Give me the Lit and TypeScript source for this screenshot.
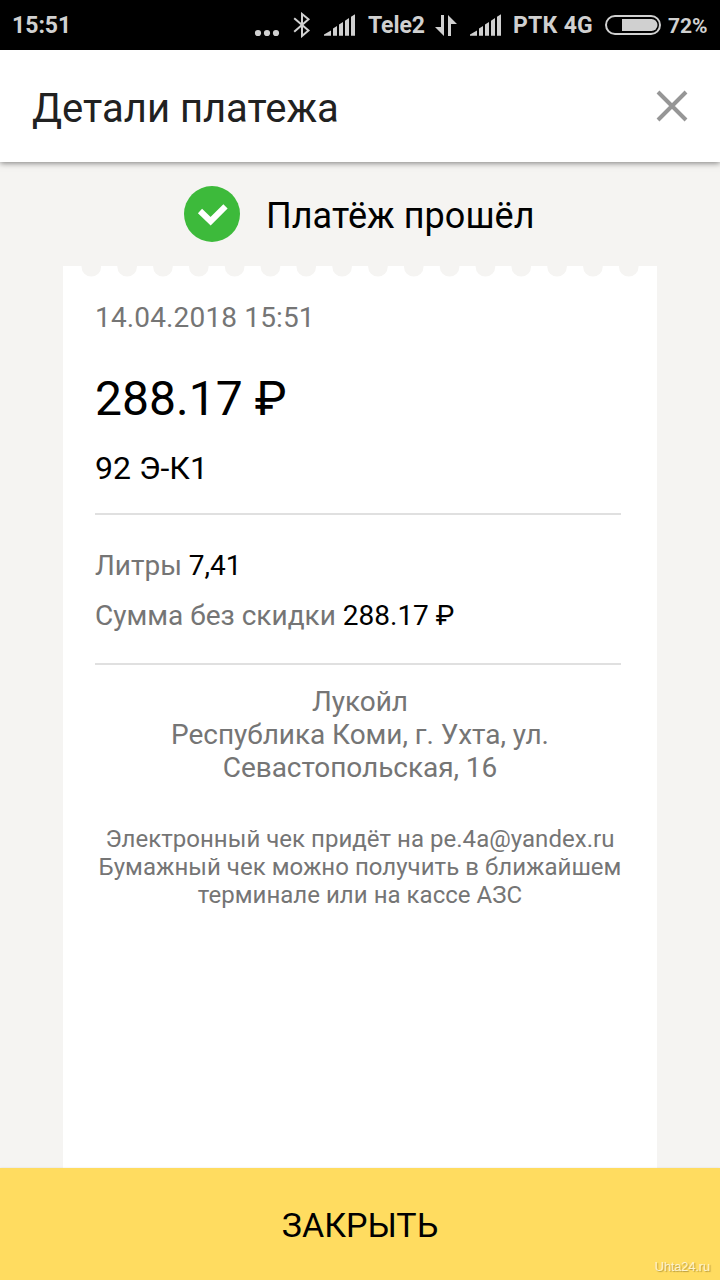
import { LitElement, html, svg, css } from "lit";
import { customElement } from "lit/decorators.js";

const signal = () => html`<svg class="signal" width="32" height="22" viewBox="0 0 32 22">
  <path fill="#d0d0d0" d="M0 21.7V20.5L7 16.4V21.7ZM9 21.7V14.6L13 12V21.7ZM15 21.7V10.6L19 8V21.7ZM21 21.7V6.8L25 4V21.7ZM27 21.7V2.8L31 0.2V21.7Z"/>
</svg>`;

@customElement("status-bar")
class StatusBar extends LitElement {
  static styles = css`
    :host { display: flex; align-items: flex-start; height: 50px; background: #000; color: #d0d0d0;
      font: 700 23px/50px Roboto, sans-serif; white-space: nowrap; }
    span { display: block; flex: none; height: 50px; padding-top: 1px; box-sizing: border-box; }
    svg { display: block; flex: none; }
    .time { width: 242px; padding-left: 12px; }
    .dots { margin: 29px 0 0 12px; }
    .bt { margin: 12px 0 0 13px; }
    .signal { margin: 14px 0 0 13px; }
    .op1 { width: 56px; margin-left: 12px; letter-spacing: -0.1px; }
    .arrows { margin: 15px 0 0 11px; }
    .op2 { width: 82px; margin-left: 11px; letter-spacing: 0.25px; }
    .battery { margin: 14px 0 0 9px; }
    .pct { margin-left: 6px; font-size: 21px; }
  `;
  render() {
    return html`
      <span class="time">15:51</span>
      <svg class="dots" width="26" height="8" viewBox="0 0 26 8" fill="#d0d0d0">
        <circle cx="4" cy="4" r="3.1"/><circle cx="13" cy="4" r="3.1"/><circle cx="22" cy="4" r="3.1"/>
      </svg>
      <svg class="bt" width="18" height="26" viewBox="0 0 18 26" fill="none" stroke="#d0d0d0" stroke-width="2">
        <path d="M1.2 6.2L15.5 18.5L9 24V2L15.5 7.3L1.2 19.8"/>
      </svg>
      ${signal()}
      <span class="op1">Tele2</span>
      <svg class="arrows" width="22" height="21" viewBox="0 0 22 21" fill="#d0d0d0">
        <path d="M6 0H9V21L0 12H6ZM13 0L22 9H16V21H13Z"/>
      </svg>
      ${signal()}
      <span class="op2">РТК 4G</span>
      <svg class="battery" width="58" height="22" viewBox="0 0 58 22">
        <rect x="2" y="2" width="54" height="18" rx="9" fill="none" stroke="#d0d0d0" stroke-width="2"/>
        <path fill="#d0d0d0" d="M18 5H47.5A6 6 0 0 1 47.5 17H18Z"/>
      </svg>
      <span class="pct">72%</span>
    `;
  }
}

@customElement("app-root")
class AppRoot extends LitElement {
  static styles = css`
    :host { display: flex; flex-direction: column; position: relative; width: 720px; height: 1280px; overflow: hidden;
      background: #f5f4f2; color: #000; font-family: Roboto, sans-serif; }
    svg { display: block; flex: none; }
    status-bar { flex: none; }
    .header { display: flex; justify-content: space-between; flex: none; height: 112px; box-sizing: border-box;
      padding: 0 32px; background: #fff; color: #212121; box-shadow: 0 1px 6px rgba(0,0,0,.5); }
    .title { padding-top: 3px; font-size: 40px; line-height: 112px; }
    .close { margin-top: 40px; }
    .result { display: flex; flex: none; height: 104px; padding-left: 184px; }
    .check { margin: 24px 26px 0 0; }
    .result-text { padding-top: 2px; font-size: 36px; line-height: 104px; letter-spacing: 0.06px; }
    .receipt { flex: 1; width: 594px; margin-left: 63px; box-sizing: border-box; background: #fff; min-height: 0; }
    .body { padding: 24px 36px 0 32px; }
    .date { color: #757575; font-size: 28px; line-height: 33px; letter-spacing: 0.15px; }
    .amount { margin-top: 37px; font-size: 48px; line-height: 56px; letter-spacing: 0.05px; }
    .fuel { margin-top: 22px; font-size: 32px; line-height: 38px; }
    .rule { height: 2px; background: #e0e0e0; }
    .r1 { margin-top: 26px; }
    .facts { padding-top: 26px; height: 122px; font-size: 28px; line-height: 50px; }
    .label, .place, .note { color: #757575; }
    .place { margin-top: 20px; font-size: 28px; line-height: 33px; text-align: center; padding-left: 4px; letter-spacing: -0.05px; }
    .note { margin: 41px -10px 0 -6px; font-size: 24px; line-height: 28px; text-align: center; letter-spacing: 0.03px; }
    .place div, .note div { white-space: nowrap; }
    .button { flex: none; height: 112px; background: #ffdc60; text-align: center; font-size: 34px; line-height: 115px;
      box-shadow: 0 0 2px rgba(0,0,0,.1); }
    .mark { position: absolute; right: 10px; bottom: 6px; font: 13px/15px "Liberation Sans", sans-serif; letter-spacing: -0.2px;
      color: #fff3cd; text-shadow: 1px 1px 1px rgba(110,90,30,.5); }
  `;
  render() {
    return html`
      <status-bar></status-bar>
      <div class="header">
        <div class="title">Детали платежа</div>
        <svg class="close" width="32" height="32" viewBox="0 0 32 32" stroke="#969696" stroke-width="4">
          <path d="M2 2L30 30M30 2L2 30"/>
        </svg>
      </div>
      <div class="result">
        <svg class="check" width="56" height="56" viewBox="0 0 56 56">
          <circle cx="28" cy="28" r="28" fill="#3dba3b"/>
          <path d="M16 25L26.6 35.2L41.5 20.3" fill="none" stroke="#fff" stroke-width="6"/>
        </svg>
        <div class="result-text">Платёж прошёл</div>
      </div>
      <div class="receipt">
        <svg width="594" height="11" viewBox="0 0 594 11" fill="#f5f4f2">
          ${Array.from({ length: 16 }, (_, i) => svg`<circle cx=${28.3 + i * 35.83} cy="0.7" r="9.8"/>`)}
        </svg>
        <div class="body">
          <div class="date">14.04.2018 15:51</div>
          <div class="amount">288.17 ₽</div>
          <div class="fuel">92 Э-К1</div>
          <div class="rule r1"></div>
          <div class="facts">
            <div><span class="label">Литры</span> 7,41</div>
            <div><span class="label">Сумма без скидки</span> 288.17 ₽</div>
          </div>
          <div class="rule"></div>
          <div class="place">
            <div>Лукойл</div><div>Республика Коми, г. Ухта, ул.</div><div>Севастопольская, 16</div>
          </div>
          <div class="note">
            <div>Электронный чек придёт на pe.4a@yandex.ru</div>
            <div>Бумажный чек можно получить в ближайшем</div>
            <div>терминале или на кассе АЗС</div>
          </div>
        </div>
      </div>
      <div class="button">ЗАКРЫТЬ</div>
      <div class="mark">Uhta24.ru</div>
    `;
  }
}
